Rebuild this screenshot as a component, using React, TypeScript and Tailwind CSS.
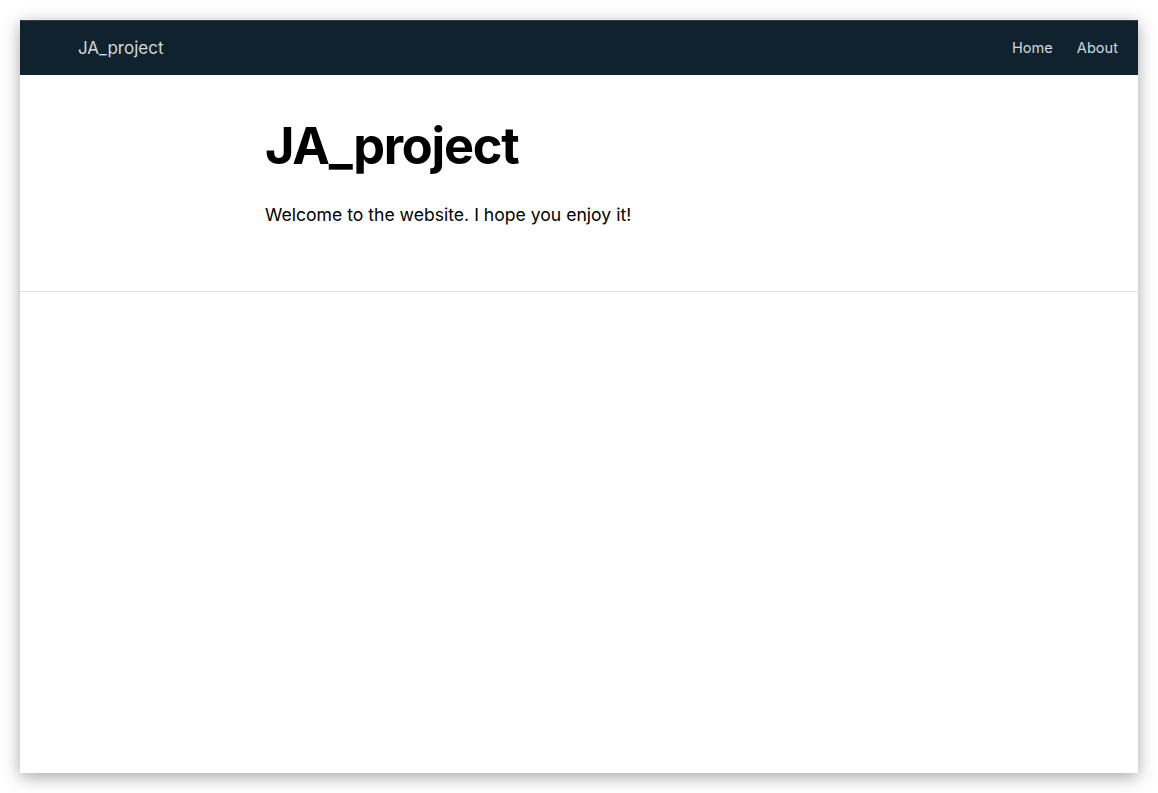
const App = () => {
  return (
    <div className="min-h-screen bg-white p-5 font-['Inter',sans-serif]">
      <div className="flex h-[753px] flex-col bg-white shadow-[0_4px_16px_rgba(0,0,0,0.35)]">
        <nav className="flex h-[55px] items-center justify-between border-t border-[#3a3f44] bg-[#10222e] pl-[58px] pr-5">
          <a href="#" className="mt-px text-[17px] text-[#d3d8db]">
            JA_project
          </a>
          <div className="mt-px flex gap-6 text-[14.6px] text-[#d3d8db]">
            <a href="#">Home</a>
            <a href="#">About</a>
          </div>
        </nav>
        <header className="border-b border-[#e0e0e0] pb-[63px] pl-[245px] pt-[46px]">
          <h1 className="text-[50.5px] leading-none font-bold tracking-tight text-black">JA_project</h1>
          <p className="mt-[30px] text-[17.6px] text-black">
            Welcome to the website. I hope you enjoy it!
          </p>
        </header>
      </div>
    </div>
  );
};

export default App;
